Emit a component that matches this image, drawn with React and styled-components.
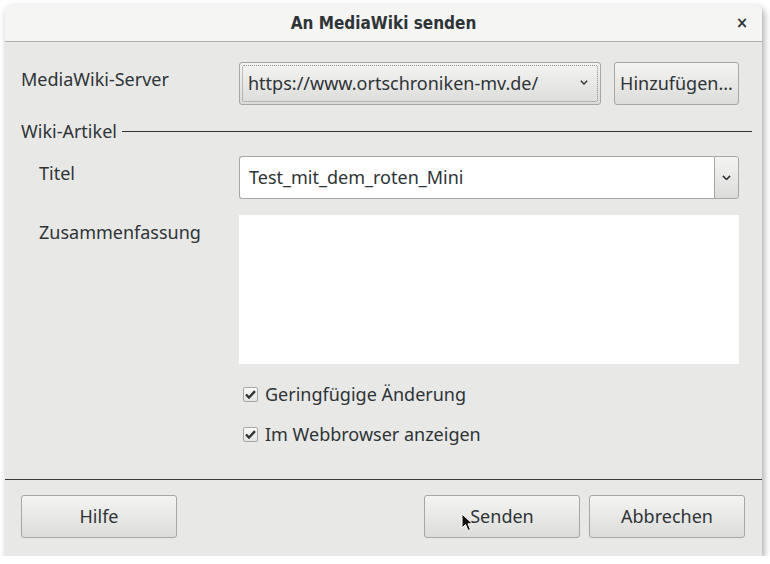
import React from "react";
import styled, { createGlobalStyle } from "styled-components";

const GlobalStyle = createGlobalStyle`
  body {
    margin: 0;
    background: #ffffff;
    font-family: "Noto Sans", "Open Sans", sans-serif;
    color: #2e3436;
  }
`;

const Win = styled.div`
  position: relative;
  margin: 5px 0 0 5px;
  width: 757px;
  height: 551px;
  background: #e8e8e7;
  border-radius: 6px 6px 0 0;
  box-shadow: 2px 3px 7px rgba(0, 0, 0, 0.35);
  display: flex;
  flex-direction: column;
  overflow: hidden;
`;

const TitleBar = styled.div`
  box-sizing: border-box;
  height: 37px;
  flex: 0 0 37px;
  background: #f5f5f4;
  border-bottom: 1px solid #b0b0ad;
  display: flex;
  align-items: center;
  justify-content: center;
  position: relative;
  font-family: "DejaVu Sans Condensed", "Liberation Sans Narrow", "Open Sans", sans-serif;
  font-weight: bold;
  font-size: 17px;
  color: #2e3436;
`;

const Close = styled.span`
  position: absolute;
  right: 14px;
  top: 8px;
  font-size: 16px;
  font-weight: bold;
  color: #2e3436;
`;

const Content = styled.div`
  flex: 1;
  padding: 20px 10px 0 16px;
  display: flex;
  flex-direction: column;
`;

const Row = styled.div`
  display: grid;
  grid-template-columns: ${(p) => p.$label}px 1fr;
  margin-right: ${(p) => p.$right || 0}px;
  margin-top: ${(p) => p.$top || 0}px;
  align-items: start;
`;

const Label = styled.div`
  font-size: 18px;
  line-height: 22px;
  padding-top: ${(p) => p.$pt || 6}px;
`;

const Controls = styled.div`
  display: flex;
  gap: 13px;
`;

const Button = styled.div`
  box-sizing: border-box;
  width: ${(p) => p.$w}px;
  height: 43px;
  padding-bottom: 2px;
  border: 1px solid #a6a6a3;
  border-radius: 3px;
  background: linear-gradient(#f4f4f3, #dcdcda);
  display: flex;
  align-items: center;
  justify-content: center;
  font-size: 18px;
  color: #2e3436;
`;

const Combo = styled(Button)`
  justify-content: space-between;
  padding: 0 12px 2px 8px;
  position: relative;
  &::after {
    content: "";
    position: absolute;
    inset: 2px;
    border: 1px dotted #8a8a88;
    border-radius: 2px;
  }
`;

const Chevron = ({ size = 8 }) => (
  <svg width={size} height={size * 0.6} viewBox="0 0 10 6">
    <path d="M1 1 L5 5 L9 1" fill="none" stroke="#2e3436" strokeWidth="1.8" />
  </svg>
);

const Frame = styled.div`
  margin-top: 15px;
  display: flex;
  flex-direction: column;
`;

const FrameHead = styled.div`
  display: flex;
  align-items: center;
  gap: 5px;
  font-size: 18px;
  line-height: 22px;
  &::after {
    content: "";
    flex: 1;
    height: 1px;
    background: #2e3436;
  }
`;

const Inner = styled.div`
  padding-left: 18px;
  margin-right: 13px;
  display: flex;
  flex-direction: column;
`;

const Entry = styled.div`
  display: flex;
  height: 43px;
`;

const EntryField = styled.div`
  box-sizing: border-box;
  flex: 1;
  background: #ffffff;
  border: 1px solid #a6a6a3;
  border-right: none;
  border-radius: 3px 0 0 3px;
  display: flex;
  align-items: center;
  padding: 0 0 2px 9px;
  font-size: 18px;
`;

const DropBtn = styled(Button)`
  border-radius: 0 3px 3px 0;
  padding: 0;
`;

const TextArea = styled.div`
  height: 149px;
  background: #ffffff;
`;

const Checks = styled.div`
  display: flex;
  flex-direction: column;
  gap: 18px;
  margin-top: 19px;
  padding-left: 204px;
`;

const Check = styled.div`
  display: flex;
  align-items: center;
  gap: 7px;
  font-size: 18px;
  line-height: 22px;
`;

const Box = styled.span`
  box-sizing: border-box;
  width: 15px;
  height: 15px;
  border: 1px solid #a6a6a3;
  border-radius: 2px;
  background: linear-gradient(#fafafa, #e4e4e2);
  display: flex;
  align-items: center;
  justify-content: center;
`;

const Footer = styled.div`
  box-sizing: border-box;
  flex: 0 0 77px;
  border-top: 1px solid #3a3a3a;
  display: flex;
  align-items: flex-start;
  padding: 15px 17px 0 16px;
  position: relative;
`;

const Spacer = styled.div`
  flex: 1;
`;

const Gap = styled.div`
  width: 9px;
`;

const Pointer = styled.svg`
  position: absolute;
  left: 456px;
  top: 33px;
`;

const Tick = () => (
  <svg width="11" height="9" viewBox="0 0 11 9">
    <path d="M1 4.5 L4 7.5 L10 1.2" fill="none" stroke="#2e3436" strokeWidth="2.4" />
  </svg>
);

export default function App() {
  return (
    <>
      <GlobalStyle />
      <Win>
        <TitleBar>
          An MediaWiki senden
          <Close>×</Close>
        </TitleBar>
        <Content>
          <Row $label={218} $right={13}>
            <Label $pt={6}>MediaWiki-Server</Label>
            <Controls>
              <Combo $w={362}>
                <span>https://www.ortschroniken-mv.de/</span>
                <Chevron />
              </Combo>
              <Button $w={125}>Hinzufügen...</Button>
            </Controls>
          </Row>
          <Frame>
            <FrameHead>Wiki-Artikel</FrameHead>
            <Inner>
              <Row $label={200} $top={14}>
                <Label $pt={6}>Titel</Label>
                <Entry>
                  <EntryField>Test_mit_dem_roten_Mini</EntryField>
                  <DropBtn $w={25}>
                    <Chevron size={9} />
                  </DropBtn>
                </Entry>
              </Row>
              <Row $label={200} $top={16}>
                <Label $pt={6}>Zusammenfassung</Label>
                <TextArea />
              </Row>
              <Checks>
                <Check>
                  <Box><Tick /></Box>
                  Geringfügige Änderung
                </Check>
                <Check>
                  <Box><Tick /></Box>
                  Im Webbrowser anzeigen
                </Check>
              </Checks>
            </Inner>
          </Frame>
        </Content>
        <Footer>
          <Button $w={156}>Hilfe</Button>
          <Spacer />
          <Button $w={156}>Senden</Button>
          <Gap />
          <Button $w={156}>Abbrechen</Button>
          <Pointer width="13" height="20" viewBox="0 0 13 20">
            <path d="M1 1 L1 15 L4.5 11.5 L7 17.5 L9.5 16.5 L7 10.8 L11.5 10.8 Z" fill="#111" stroke="#fff" strokeWidth="1" />
          </Pointer>
        </Footer>
      </Win>
    </>
  );
}
